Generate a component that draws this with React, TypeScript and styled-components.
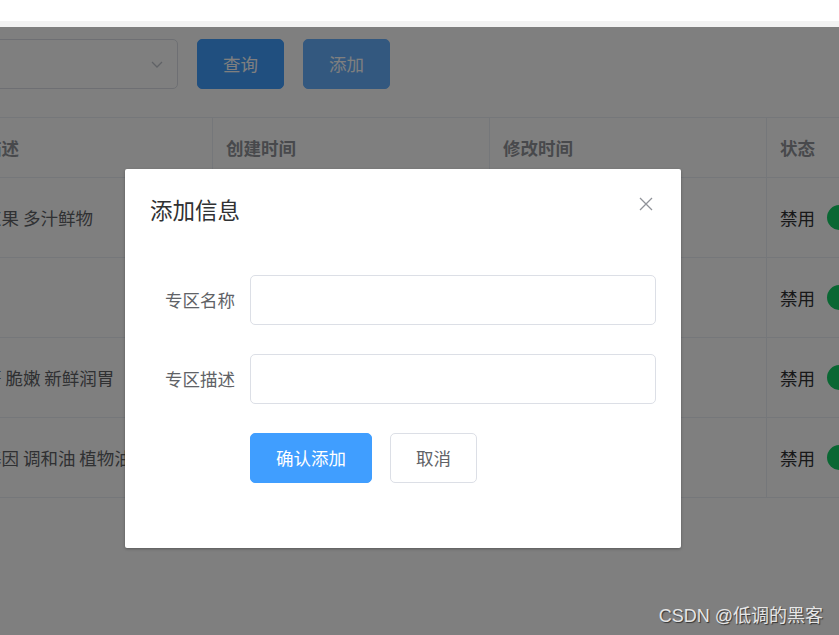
import styled, { createGlobalStyle } from "styled-components";

const GlobalStyle = createGlobalStyle`
    html, body {
        margin: 0;
        padding: 0;
        height: 100%;
        overflow: hidden;
        background: #fff;
    }
    body {
        font-family: "Noto Sans CJK SC", "Liberation Sans", sans-serif;
        color: #606266;
    }
    * {
        box-sizing: border-box;
    }
`;

const TopBar = styled.div`
    height: 27px;
    background: #fff;
    border-bottom: 6px solid #f2f2f2;
`;

const Main = styled.div`
    position: relative;
    height: 608px;
    overflow: hidden;
    background: #fff;
`;

const Toolbar = styled.div`
    display: flex;
    align-items: center;
    gap: 19px;
    padding-top: 12px;
`;

const Select = styled.div`
    width: 200px;
    height: 50px;
    margin-left: -22px;
    border: 1px solid #dcdfe6;
    border-radius: 5px;
    display: flex;
    align-items: center;
    justify-content: flex-end;
    padding-right: 14px;
`;

const Button = styled.button<{ $tone?: "primary" | "light" | "plain" }>`
    height: 50px;
    padding: 0 25px;
    border-radius: 5px;
    font-family: inherit;
    font-size: 17.5px;
    line-height: 1;
    cursor: pointer;
    border: 1px solid
        ${(p) => (p.$tone === "primary" ? "#409eff" : p.$tone === "light" ? "#66b1ff" : "#dcdfe6")};
    background: ${(p) => (p.$tone === "primary" ? "#409eff" : p.$tone === "light" ? "#66b1ff" : "#fff")};
    color: ${(p) => (p.$tone === "plain" ? "#606266" : "#fff")};
`;

const Table = styled.div`
    margin-top: 28px;
    margin-left: -64px;
    width: 1050px;
    border-top: 1px solid #ebeef5;
`;

const Row = styled.div<{ $head?: boolean }>`
    display: grid;
    grid-template-columns: 277px 277px 277px 219px;
    height: ${(p) => (p.$head ? "60px" : "80px")};
    border-bottom: 1px solid #ebeef5;
`;

const Cell = styled.div<{ $head?: boolean }>`
    display: flex;
    align-items: center;
    gap: 12px;
    padding-left: 13px;
    border-right: 1px solid #ebeef5;
    font-size: 17.5px;
    white-space: nowrap;
    overflow: hidden;
    font-weight: ${(p) => (p.$head ? 700 : 400)};
    color: ${(p) => (p.$head ? "#909399" : "#606266")};
`;

const SwitchLabel = styled.span`
    color: #303133;
`;

const Switch = styled.span`
    width: 50px;
    height: 25px;
    border-radius: 13px;
    background: #13ce66;
    flex: none;
`;

const Mask = styled.div`
    position: absolute;
    inset: 0;
    background: rgba(0, 0, 0, 0.5);
`;

const Dialog = styled.div`
    position: absolute;
    left: 125px;
    top: 142px;
    width: 556px;
    background: #fff;
    border-radius: 2px;
    box-shadow: 0 1px 3px rgba(0, 0, 0, 0.3);
`;

const DialogHeader = styled.div`
    position: relative;
    padding: 25px 25px 12.5px;
`;

const Title = styled.span`
    display: block;
    font-size: 22.5px;
    line-height: 30px;
    color: #303133;
`;

const Close = styled.button`
    position: absolute;
    top: 25px;
    right: 25px;
    width: 20px;
    height: 20px;
    padding: 0;
    border: none;
    background: none;
    display: flex;
    align-items: center;
    justify-content: center;
    cursor: pointer;
`;

const DialogBody = styled.div`
    padding: 38px 25px 36px;
`;

const FormItem = styled.div`
    display: flex;
    align-items: center;
    margin-bottom: 29px;
`;

const Label = styled.label`
    width: 100px;
    padding-right: 15px;
    text-align: right;
    font-size: 17.5px;
    color: #606266;
    flex: none;
`;

const Input = styled.input`
    flex: 1;
    height: 50px;
    border: 1px solid #dcdfe6;
    border-radius: 5px;
    padding: 0 18px;
    font-family: inherit;
    font-size: 17.5px;
    outline: none;
`;

const Actions = styled.div`
    display: flex;
    gap: 18px;
    padding-left: 100px;
    margin-bottom: 29px;
`;

const Watermark = styled.div`
    position: absolute;
    right: 16px;
    bottom: 8px;
    font-family: "Liberation Sans", "Noto Sans CJK SC", sans-serif;
    font-size: 18px;
    color: #e6e6e6;
    text-shadow: 1px 1px 1px rgba(0, 0, 0, 0.6);
`;

const rows = ["新鲜浆果 多汁鲜物", "鲜嫩", "野蔓菁 脆嫩 新鲜润胃", "非转基因 调和油 植物油"];

export default function App() {
    return (
        <>
            <GlobalStyle />
            <TopBar />
            <Main>
                <Toolbar>
                    <Select>
                        <svg width="12" height="7" viewBox="0 0 12 7">
                            <path d="M1 1l5 5 5-5" fill="none" stroke="#c0c4cc" strokeWidth="1.3" />
                        </svg>
                    </Select>
                    <Button $tone="primary">查询</Button>
                    <Button $tone="light">添加</Button>
                </Toolbar>
                <Table>
                    <Row $head>
                        <Cell $head>专区描述</Cell>
                        <Cell $head>创建时间</Cell>
                        <Cell $head>修改时间</Cell>
                        <Cell $head>状态</Cell>
                    </Row>
                    {rows.map((text, i) => (
                        <Row key={i}>
                            <Cell>{text}</Cell>
                            <Cell />
                            <Cell />
                            <Cell>
                                <SwitchLabel>禁用</SwitchLabel>
                                <Switch />
                            </Cell>
                        </Row>
                    ))}
                </Table>
                <Mask />
                <Dialog>
                    <DialogHeader>
                        <Title>添加信息</Title>
                        <Close>
                            <svg width="14" height="14" viewBox="0 0 14 14">
                                <path d="M1 1l12 12M13 1L1 13" stroke="#909399" strokeWidth="1.3" />
                            </svg>
                        </Close>
                    </DialogHeader>
                    <DialogBody>
                        <FormItem>
                            <Label>专区名称</Label>
                            <Input />
                        </FormItem>
                        <FormItem>
                            <Label>专区描述</Label>
                            <Input />
                        </FormItem>
                        <Actions>
                            <Button $tone="primary">确认添加</Button>
                            <Button $tone="plain">取消</Button>
                        </Actions>
                    </DialogBody>
                </Dialog>
                <Watermark>CSDN @低调的黑客</Watermark>
            </Main>
        </>
    );
}
